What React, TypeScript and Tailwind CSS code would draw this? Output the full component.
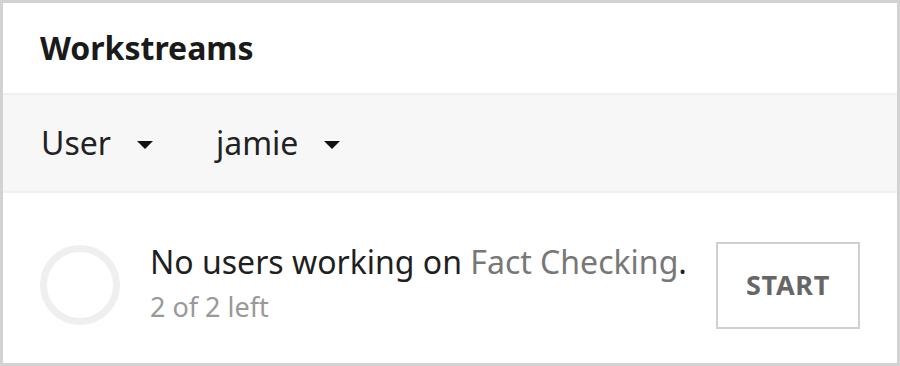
import React from "react";

function Caret() {
  return (
    <svg width="20" height="10" viewBox="0 0 20 10" className="ml-6 mt-1">
      <path d="M2 1 L18 1 L10 9 Z" fill="#111" />
    </svg>
  );
}

export default function App() {
  return (
    <div
      className="w-[900px] h-[366px] bg-white border-[3px] border-[#d2d2d2] flex flex-col"
      style={{ fontFamily: '"Noto Sans", "Open Sans", sans-serif' }}
    >
      {/* header */}
      <div className="h-[92px] shrink-0 flex items-center pl-[37px] border-b-2 border-[#f0f0f0]">
        <h1 className="text-[32px] font-bold text-[#1a1a1a]">Workstreams</h1>
      </div>

      {/* filters */}
      <div className="h-[98px] shrink-0 bg-[#f7f7f7] border-b-2 border-[#f0f0f0] flex items-center pl-[38px]">
        <div className="flex items-center text-[32px] text-[#222]">
          User
          <Caret />
        </div>
        <div className="flex items-center text-[32px] text-[#222] ml-[61px]">
          jamie
          <Caret />
        </div>
      </div>

      {/* workstream row */}
      <div className="flex-1 flex items-center pl-[37px] pr-[37px] pt-[14px]">
        <div className="w-[80px] h-[80px] rounded-full border-[7px] border-[#efefef] shrink-0" />
        <div className="flex-1 ml-[30px] mb-[4px]">
          <div className="text-[32px] leading-[40px] text-[#1f1f1f]">
            No users working on <span className="text-[#777]">Fact Checking</span>.
          </div>
          <div className="text-[27px] leading-[34px] mt-[8px] text-[#999]">2 of 2 left</div>
        </div>
        <button className="w-[144px] h-[87px] border-2 border-[#d0d0d0] bg-white text-[27px] font-bold text-[#666] tracking-wide">
          START
        </button>
      </div>
    </div>
  );
}
